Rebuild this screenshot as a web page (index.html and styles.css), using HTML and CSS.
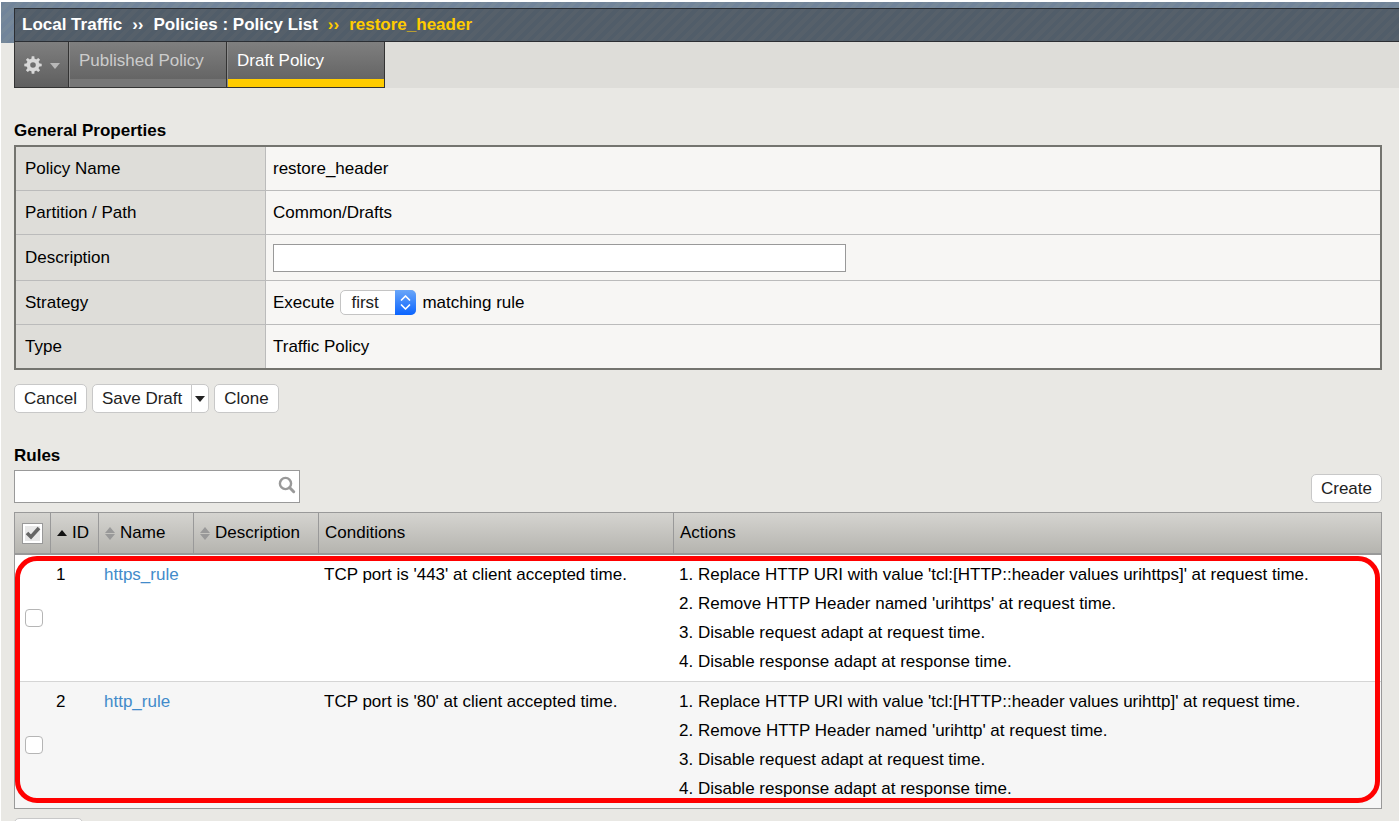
FILE: index.html
```
<!DOCTYPE html>
<html lang="en">
<head>
<meta charset="utf-8">
<title>Policy List: restore_header</title>
<link rel="stylesheet" href="styles.css">
</head>
<body>
<div class="page">
  <header class="band">
    <nav class="crumbs" aria-label="Breadcrumb">
      <span>Local Traffic</span><span class="sep">››</span><span>Policies : Policy List</span><span class="sep current">››</span><span class="current">restore_header</span>
    </nav>
  </header>
  <nav class="tabs" aria-label="Policy views">
    <button class="tab tab-gear" type="button" aria-label="Settings">
      <svg width="18" height="18" viewBox="0 0 18 18" aria-hidden="true">
        <g fill="#d8d8d8">
          <path fill-rule="evenodd" d="M9 2.500a6.500 6.500 0 1 0 0 13 6.500 6.500 0 0 0 0-13zm0 3.700a2.800 2.800 0 1 1 0 5.600 2.800 2.800 0 0 1 0-5.600z"/>
          <path id="t" d="M7.300 4L7.700 .3h2.600l.4 3.700zM7.300 14l.4 3.700h2.600l.4-3.700z"/>
          <use href="#t" transform="rotate(45 9 9)"/><use href="#t" transform="rotate(90 9 9)"/><use href="#t" transform="rotate(135 9 9)"/>
        </g>
      </svg>
      <svg class="caret" width="10" height="6" viewBox="0 0 10 6" aria-hidden="true"><path d="M0 0h10L5 6z" fill="#b8b8b8"/></svg>
    </button>
    <a class="tab" href="#published">Published Policy</a>
    <a class="tab active" href="#draft">Draft Policy</a>
  </nav>
  <main class="content">
    <h2>General Properties</h2>
    <table class="props">
      <tbody>
        <tr><th scope="row">Policy Name</th><td>restore_header</td></tr>
        <tr><th scope="row">Partition / Path</th><td>Common/Drafts</td></tr>
        <tr class="tall"><th scope="row"><label for="desc">Description</label></th><td><input class="desc" id="desc" type="text"></td></tr>
        <tr><th scope="row"><label for="strategy">Strategy</label></th><td>
          <div class="strategy"><span>Execute</span>
            <span class="picker"><select id="strategy"><option>first</option><option>all</option><option>best</option></select>
              <svg class="arrows" viewBox="0 0 20 25" aria-hidden="true"><path d="M6 10l4-4 4 4M6 15l4 4 4-4" fill="none" stroke="#fff" stroke-width="1.700" stroke-linecap="round" stroke-linejoin="round"/></svg></span>
            <span>matching rule</span></div></td></tr>
        <tr><th scope="row">Type</th><td>Traffic Policy</td></tr>
      </tbody>
    </table>
    <div class="actions">
      <button class="btn" type="button">Cancel</button>
      <div class="split">
        <button class="btn" type="button">Save Draft</button>
        <button class="btn more" type="button" aria-label="More save options"><svg width="10" height="6" viewBox="0 0 10 6" aria-hidden="true"><path d="M0 0h10L5 6z" fill="#222"/></svg></button>
      </div>
      <button class="btn" type="button">Clone</button>
    </div>
    <h2>Rules</h2>
    <div class="toolbar">
      <div class="search">
        <input type="search" aria-label="Search rules">
        <svg width="18" height="18" viewBox="0 0 18 18" aria-hidden="true"><circle cx="7.500" cy="7.500" r="5.600" fill="none" stroke="#999" stroke-width="2.400"/><path d="M11.800 11.800l3.900 3.900" stroke="#999" stroke-width="3" stroke-linecap="round"/></svg>
      </div>
      <button class="btn" type="button">Create</button>
    </div>
    <div class="rules-wrap">
      <table class="rules">
        <colgroup><col class="c-check"><col class="c-id"><col class="c-name"><col class="c-desc"><col class="c-cond"><col></colgroup>
        <thead>
          <tr>
            <th scope="col" class="pick"><button class="all" type="button" aria-label="Select all rules"><svg width="16" height="16" viewBox="0 0 16 16" aria-hidden="true"><path d="M2 8l4 4 8-9" fill="none" stroke="#666" stroke-width="3.600"/></svg></button></th>
            <th scope="col"><span class="sort"><svg width="10" height="6" viewBox="0 0 10 6" aria-hidden="true"><path d="M0 6h10L5 0z" fill="#111"/></svg>ID</span></th>
            <th scope="col"><span class="sort"><svg width="10" height="13" viewBox="0 0 10 13" aria-hidden="true"><path d="M0 6h10L5 0zM0 7h10l-5 6z" fill="#999"/></svg>Name</span></th>
            <th scope="col"><span class="sort"><svg width="10" height="13" viewBox="0 0 10 13" aria-hidden="true"><path d="M0 6h10L5 0zM0 7h10l-5 6z" fill="#999"/></svg>Description</span></th>
            <th scope="col">Conditions</th>
            <th scope="col">Actions</th>
          </tr>
        </thead>
        <tbody>
          <tr>
            <td class="pick"><input type="checkbox" aria-label="Select https_rule"></td>
            <td>1</td>
            <td><a href="#https_rule">https_rule</a></td>
            <td></td>
            <td>TCP port is '443' at client accepted time.</td>
            <td><div>1. Replace HTTP URI with value 'tcl:[HTTP::header values urihttps]' at request time.</div><div>2. Remove HTTP Header named 'urihttps' at request time.</div><div>3. Disable request adapt at request time.</div><div>4. Disable response adapt at response time.</div></td>
          </tr>
          <tr>
            <td class="pick"><input type="checkbox" aria-label="Select http_rule"></td>
            <td>2</td>
            <td><a href="#http_rule">http_rule</a></td>
            <td></td>
            <td>TCP port is '80' at client accepted time.</td>
            <td><div>1. Replace HTTP URI with value 'tcl:[HTTP::header values urihttp]' at request time.</div><div>2. Remove HTTP Header named 'urihttp' at request time.</div><div>3. Disable request adapt at request time.</div><div>4. Disable response adapt at response time.</div></td>
          </tr>
        </tbody>
      </table>
      <div class="highlight"></div>
    </div>
    <div class="footer-actions"><button class="btn blank" type="button" aria-label="Rule actions"></button></div>
  </main>
</div>
</body>
</html>
```
FILE: styles.css
```
* { box-sizing: border-box; }
body {
  margin: 0;
  padding: 2px 1px 1px;
  height: 100vh;
  background: #fff;
  color: #000;
  font: 17px/20px "Liberation Sans", Arial, sans-serif;
}
button, input, select { font: inherit; color: inherit; margin: 0; }
svg { display: block; flex: none; }
.page { height: 100%; overflow: hidden; background: #e9e8e4; }

.band {
  padding: 6px 0 1px 13px;
  background: repeating-linear-gradient(135deg, #71849a 0 4px, #768899 4px 8px);
}
.crumbs {
  display: flex;
  align-items: center;
  height: 34px;
  padding-left: 7px;
  border: 1px solid #2b2e33;
  border-right: 0;
  background: repeating-linear-gradient(135deg, #515d69 0 4px, #56606a 4px 8px);
  color: #fff;
  font-weight: bold;
}
.sep { margin: 0 10px; }
.current { color: #fc0; }

.tabs {
  display: flex;
  margin: -1px 0 0 13px;
  height: 46px;
  background: #deddd9;
}
.tab {
  width: 158px;
  padding: 9px 0 0 10px;
  border: solid #333;
  border-width: 0 1px 1px 0;
  background: linear-gradient(#7f7f7f, #656565 37px, #777 37px);
  box-shadow: inset 1px 0 #8d8d8d;
  color: #ccc;
  text-decoration: none;
}
.tab.active {
  background: linear-gradient(#7f7f7f, #656565 37px, #fc0 37px);
  color: #fff;
}
.tab-gear {
  display: flex;
  align-items: center;
  gap: 8px;
  width: 55px;
  padding: 0 0 0 9px;
  border-left-width: 1px;
  background: linear-gradient(#7f7f7f, #5f5f5f);
  box-shadow: none;
}
.tab-gear .caret { margin-top: 3px; }

.content { padding: 33px 17px 0 13px; }
h2 { margin: 0; font-size: 17px; line-height: 20px; }

.props {
  width: 100%;
  margin-top: 4px;
  border: 2px solid #74746f;
  border-spacing: 0;
  table-layout: fixed;
  background: #f7f6f4;
}
.props th, .props td {
  height: 44px;
  padding: 0 7px;
  border-bottom: 1px solid #bbb;
  text-align: left;
}
.props th {
  width: 250px;
  padding-left: 9px;
  border-right: 1px solid #bbb;
  background: #deddd9;
  font-weight: normal;
}
.props .tall > * { height: 46px; }
.props tr:last-child > * { height: 43px; border-bottom: 0; }
.desc {
  display: block;
  width: 573px;
  max-width: 100%;
  height: 28px;
  border: 1px solid #999;
  background: #fff;
}
.strategy { display: flex; align-items: center; gap: 6px; }
.picker { display: grid; width: 76px; height: 25px; }
.picker > * { grid-area: 1 / 1; }
.picker select {
  appearance: none;
  width: 100%;
  height: 100%;
  padding: 0 10px;
  border: 1px solid #c4c4c4;
  border-radius: 5px;
  background: #fff;
  color: #222;
}
.arrows {
  justify-self: end;
  width: 21px;
  height: 25px;
  border-radius: 0 5px 5px 0;
  background: linear-gradient(#6aa6f8, #0a64ff);
  pointer-events: none;
}

.actions { display: flex; gap: 5px; margin: 14px 0 33px; }
.btn {
  height: 29px;
  padding: 0 9px;
  border: 1px solid #c8c8c8;
  border-radius: 5px;
  background: #fff;
  color: #222;
}
.split { display: flex; }
.split .btn:first-child { border-radius: 5px 0 0 5px; }
.split .more { width: 18px; margin-left: -1px; padding: 0 3px; border-radius: 0 5px 5px 0; }

.toolbar { display: flex; justify-content: space-between; align-items: flex-end; margin-top: 4px; }
.search { display: grid; width: 286px; }
.search > * { grid-area: 1 / 1; }
.search input {
  appearance: none;
  height: 33px;
  padding: 0 30px 0 6px;
  border: 1px solid #999;
  border-radius: 0;
  background: #fff;
}
.search svg { justify-self: end; margin: 6px 4px; }

.rules-wrap { position: relative; margin-top: 9px; }
.rules {
  width: 100%;
  border: 1px solid #999;
  border-spacing: 0;
  table-layout: fixed;
  background: #fff;
}
.c-check { width: 36px; }
.c-id { width: 48px; }
.c-name { width: 95px; }
.c-desc { width: 125px; }
.c-cond { width: 355px; }
.rules th {
  height: 42px;
  padding: 0 0 0 6px;
  border-right: 1px solid #999;
  border-bottom: 2px solid #999;
  background: linear-gradient(#d5d4d0, #b5b4af);
  font-weight: normal;
  text-align: left;
}
.rules th:last-child { border-right: 0; }
.sort { display: flex; align-items: center; gap: 5px; }
.rules td {
  padding: 5px 0 5px 5px;
  border-bottom: 1px solid #d5d5d5;
  line-height: 29px;
  vertical-align: top;
}
.rules tbody tr:last-child td { border-bottom: 0; background: #f6f6f6; }
.rules a { color: #428bca; text-decoration: none; }
.rules .pick { vertical-align: middle; }
.rules td.pick { padding-left: 10px; }
.all {
  display: grid;
  place-items: center;
  width: 21px;
  height: 21px;
  margin-left: 1px;
  padding: 0;
  border: 1px solid #999;
  background: #e8e8e8;
  box-shadow: inset 0 0 0 2px #fff;
}
.rules input {
  appearance: none;
  display: block;
  width: 18px;
  height: 18px;
  border: 1px solid #b5b5b5;
  border-radius: 4px;
  background: #fff;
}
.highlight {
  position: absolute;
  inset: 44px 2px 6px 1px;
  border: 5px solid #f00;
  border-radius: 22px;
  pointer-events: none;
}
.footer-actions { margin-top: 9px; }
.blank { width: 69px; }
```
